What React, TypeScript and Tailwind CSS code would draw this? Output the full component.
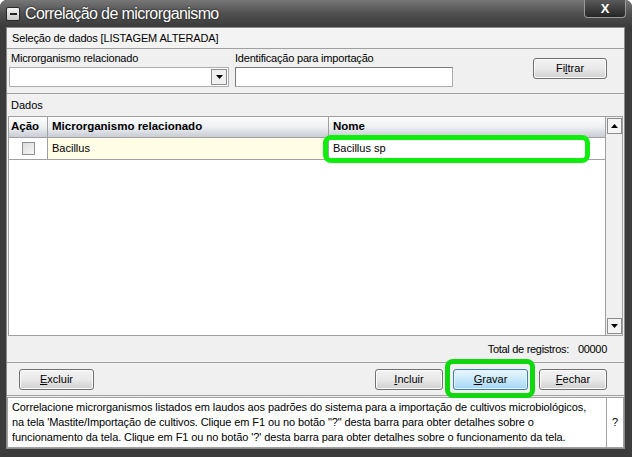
import React from 'react';

const btn =
  'h-[21px] rounded-[3px] border border-[#707070] bg-gradient-to-b from-[#f3f3f3] via-[#e9e9e9] to-[#d0d0d0] text-[11px] text-black flex items-center justify-center shadow-[inset_0_0_0_1px_#fcfcfc]';

const Btn = ({ first, rest, w }: { first: string; rest: string; w: string }) => (
  <button className={`${btn} ${w}`}>
    <span className="underline underline-offset-1">{first}</span>
    {rest}
  </button>
);

export default function App() {
  return (
    <div className="relative flex h-[457px] w-[632px] flex-col overflow-hidden rounded-t-[7px] bg-[#3b3b3b] font-['Liberation_Sans',Arial,sans-serif] text-black">
      {/* title bar */}
      <div className="flex h-[27px] shrink-0 items-center bg-gradient-to-b from-[#777777] via-[#505050] to-[#3b3b3b] pl-[6px]">
        <div className="flex h-[14px] w-[14px] items-center justify-center rounded-[2px] border border-[#2a2a2a] bg-gradient-to-b from-[#f4f4f4] to-[#c8c8c8]">
          <div className="h-[2px] w-[7px] bg-[#222]" />
        </div>
        <span className="ml-[5px] text-[16px] leading-none tracking-[-0.6px] text-white [text-shadow:0_0_2px_#000]">
          Correlação de microrganismo
        </span>
      </div>
      <div className="absolute right-[6px] top-0 flex h-[18px] w-[42px] items-center justify-center rounded-b-[4px] border border-t-0 border-[#9a9a9a] bg-gradient-to-b from-[#5a5a5a] to-[#262626]">
        <span className="text-[13px] font-bold leading-none text-white">X</span>
      </div>

      {/* client */}
      <div className="mx-[6px] mr-[7px] flex min-h-0 flex-1 flex-col border border-[#8c8c8c] bg-[#f0f0f0]">
        <div className="flex h-[21px] shrink-0 items-center border-b border-[#a0a0a0] bg-[#f3f3f3] pl-[5px] text-[11px] tracking-[-0.15px]">
          Seleção de dados [LISTAGEM ALTERADA]
        </div>

        <div className="flex h-[45px] shrink-0 border-b border-[#a0a0a0] pl-[2px]">
          <div className="flex flex-col">
            <span className="mt-[1px] h-[14px] pl-[2px] text-[11px] tracking-[-0.2px]">Microrganismo relacionado</span>
            <div className="mt-[3px] flex h-[20px] w-[220px] items-center justify-end border border-[#abadb3] bg-white pr-[1px]">
              <div className="flex h-[16px] w-[16px] items-center justify-center border border-[#8c8c8c] bg-[#f0f0f0]">
                <svg width="7" height="4" viewBox="0 0 7 4">
                  <path d="M0 0h7L3.5 4z" fill="#000" />
                </svg>
              </div>
            </div>
          </div>
          <div className="ml-[6px] flex flex-col">
            <span className="mt-[1px] h-[14px] text-[11px] tracking-[-0.2px]">Identificação para importação</span>
            <div className="mt-[3px] h-[20px] w-[218px] border border-[#abadb3] border-t-[#7a7a7a] border-l-[#7a7a7a] bg-white" />
          </div>
          <div className="ml-auto mr-[17px] mt-[9px]">
            <button className={`${btn} w-[74px]`}>
              Fi<span className="underline underline-offset-1">l</span>trar
            </button>
          </div>
        </div>

        <div className="flex h-[22px] shrink-0 items-center pl-[4px] text-[11px]">Dados</div>

        {/* grid */}
        <div className="mx-[1px] flex h-[220px] shrink-0 border border-[#a0a0a0] bg-white">
          <div className="flex flex-1 flex-col">
            <div className="flex h-[21px] border-b border-[#a0a0a0] bg-gradient-to-b from-[#fdfdfe] via-[#eef0f3] to-[#c8cdd4] text-[11.5px] font-bold">
              <div className="flex w-[39px] items-center border-r border-[#a0a0a0] pl-[2px]">Ação</div>
              <div className="flex w-[281px] items-center border-r border-[#a0a0a0] pl-[4px]">Microrganismo relacionado</div>
              <div className="flex flex-1 items-center pl-[4px]">Nome</div>
            </div>
            <div className="flex h-[22px] border-b border-[#a0a0a0] text-[11px]">
              <div className="flex w-[39px] items-center justify-center border-r border-[#a0a0a0] bg-white">
                <div className="h-[13px] w-[13px] border border-[#8e8f8f] bg-gradient-to-br from-[#dcdcdc] to-[#f6f6f6]" />
              </div>
              <div className="flex w-[281px] items-center border-r border-[#a0a0a0] bg-[#fffde6] pl-[4px]">Bacillus</div>
              <div className="relative flex flex-1 items-center bg-white pl-[4px]">
                Bacillus sp
                <div className="absolute -bottom-[4px] -top-[3px] -left-[6px] right-[15px] rounded-[8px] border-[5px] border-[#0fee0f]" />
              </div>
            </div>
          </div>
          <div className="flex w-[17px] flex-col items-center justify-between border-l border-[#a0a0a0] bg-[#f0f0f0] py-[1px]">
            <div className="flex h-[16px] w-[15px] items-center justify-center border border-[#8c8c8c] bg-[#f4f4f4]">
              <svg width="7" height="4" viewBox="0 0 7 4">
                <path d="M3.5 0L7 4H0z" fill="#000" />
              </svg>
            </div>
            <div className="flex h-[16px] w-[15px] items-center justify-center border border-[#8c8c8c] bg-[#f4f4f4]">
              <svg width="7" height="4" viewBox="0 0 7 4">
                <path d="M0 0h7L3.5 4z" fill="#000" />
              </svg>
            </div>
          </div>
        </div>

        <div className="flex h-[27px] shrink-0 items-center justify-end border-b border-[#a0a0a0] pr-[17px] text-[11px] tracking-[-0.3px]">
          Total de registros:<span className="ml-[9px]">00000</span>
        </div>

        <div className="flex h-[33px] shrink-0 items-center border-b border-[#a0a0a0] pl-[12px] pr-[17px]">
          <Btn first="E" rest="xcluir" w="w-[75px]" />
          <div className="ml-auto flex items-center">
            <Btn first="I" rest="ncluir" w="w-[68px]" />
            <div className="relative ml-[10px]">
              <button className="flex h-[21px] w-[75px] items-center justify-center rounded-[3px] border border-[#3c7fb1] bg-gradient-to-b from-[#eaf6fd] via-[#c9e8fa] to-[#a4d6f4] text-[11px] text-black shadow-[inset_0_0_0_1px_#e6f4fc]">
                <span className="underline underline-offset-1">G</span>ravar
              </button>
              <div className="absolute -bottom-[8px] -left-[8px] -right-[7px] -top-[10px] rounded-[8px] border-[5px] border-[#0fd80f]" />
            </div>
            <div className="ml-[11px]">
              <Btn first="F" rest="echar" w="w-[68px]" />
            </div>
          </div>
        </div>

        <div className="flex min-h-0 flex-1 pt-[1px]">
          <div className="flex-1 border border-[#a0a0a0] bg-white pl-[4px] pt-[2px] text-[11px] leading-[15px] tracking-[-0.1px]">
            <p>Correlacione microrganismos listados em laudos aos padrões do sistema para a importação de cultivos microbiológicos,</p>
            <p>na tela 'Mastite/Importação de cultivos. Clique em F1 ou no botão "?" desta barra para obter detalhes sobre o</p>
            <p>funcionamento da tela. Clique em F1 ou no botão '?' desta barra para obter detalhes sobre o funcionamento da tela.</p>
          </div>
          <div className="flex w-[17px] items-center justify-center border border-l-0 border-[#a0a0a0] bg-white text-[11px]">?</div>
        </div>
      </div>
      <div className="h-[8px] shrink-0" />
    </div>
  );
}
